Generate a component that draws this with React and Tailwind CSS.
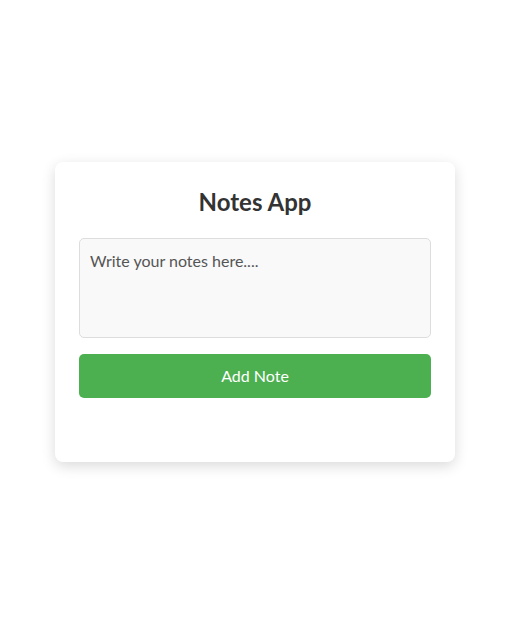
import { useState } from 'react';

const App = () => {
  const [text, setText] = useState('');
  const [notes, setNotes] = useState([]);

  const addNote = () => {
    if (!text.trim()) return;
    setNotes(prev => [...prev, text]);
    setText('');
  };

  return (
    <div className="min-h-screen bg-white pt-[162px] font-['Lato',sans-serif]">
      <div className="ml-[55px] w-[400px] rounded-[8px] bg-white px-6 pt-6 pb-16 shadow-[0_4px_14px_rgba(0,0,0,0.15)]">
        <h2 className="mb-5 text-center text-[24px] leading-8 font-bold text-[#333]">Notes App</h2>
        <textarea
          value={text}
          onChange={(e) => setText(e.target.value)}
          placeholder="Write your notes here...."
          className="block h-[100px] w-full resize-none rounded-[5px] border border-[#ddd] bg-[#f9f9f9] p-[10px] text-[16px] leading-6 text-[#333] placeholder:text-[#555] outline-none"
        />
        <button
          onClick={addNote}
          className="mt-4 block h-[44px] w-full rounded-[5px] bg-[#4caf50] text-[16px] text-white"
        >
          Add Note
        </button>
        {notes.map((n, i) => (
          <div key={i} className="mt-3 rounded-[5px] border border-[#ddd] p-2 text-[#333]">{n}</div>
        ))}
      </div>
    </div>
  );
};

export default App;
